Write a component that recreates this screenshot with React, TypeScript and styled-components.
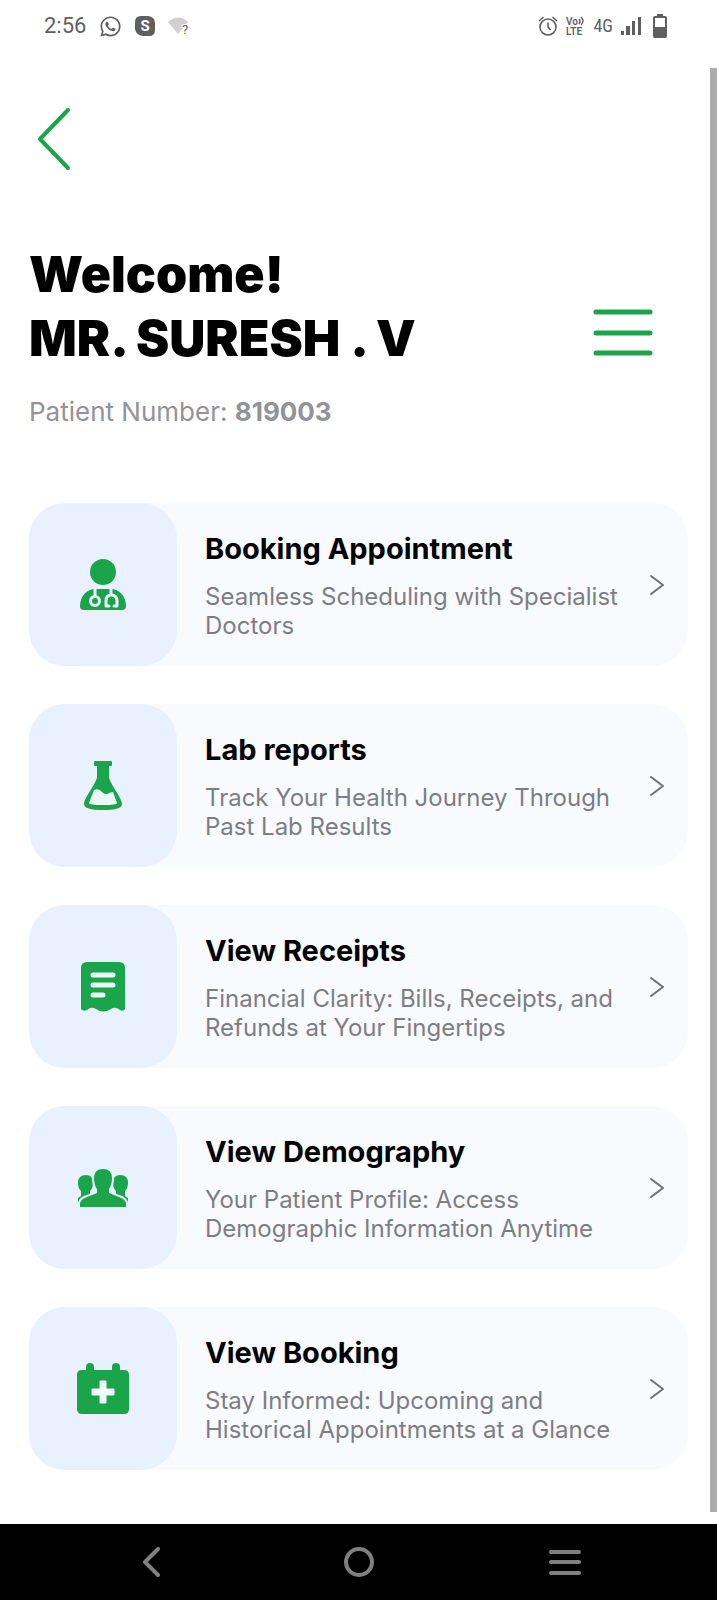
import React from "react";
import styled, { createGlobalStyle } from "styled-components";
import { FaWhatsapp } from "react-icons/fa";

const green = "#1aa54a";

const GlobalStyle = createGlobalStyle`
  *, *::before, *::after { box-sizing: border-box; }
  body {
    margin: 0;
    background: #ffffff;
    font-family: Inter, "Liberation Sans", sans-serif;
    color: #000000;
  }
`;

const Screen = styled.div`
  display: flex;
  flex-direction: column;
  min-height: 100vh;
`;

const StatusBar = styled.header`
  display: flex;
  justify-content: space-between;
  align-items: flex-start;
  height: 68px;
  padding: 10px 50px 0 44px;
  color: #5f5f5f;
  font-family: Roboto, sans-serif;
`;

const StatusGroup = styled.div<{ $gap: number }>`
  display: flex;
  align-items: center;
  gap: ${(p) => p.$gap}px;
  height: 32px;
  svg { display: block; }
`;

const Clock = styled.time`
  font-size: 22px;
  line-height: 32px;
`;

const Network = styled.span`
  font-family: "Roboto Condensed", Roboto, sans-serif;
  font-size: 18px;
  line-height: 32px;
`;

const Battery = styled.span`
  padding-left: 4px;
`;

const Body = styled.div`
  display: flex;
  flex: 1;
`;

const Content = styled.main`
  flex: 1;
  min-width: 0;
  padding: 34px 22px 54px 29px;
`;

const ScrollThumb = styled.div`
  flex: none;
  width: 7px;
  margin-bottom: 12px;
  background: #adadad;
`;

const IconButton = styled.button`
  display: flex;
  align-items: center;
  justify-content: center;
  padding: 0;
  border: 0;
  background: none;
  color: inherit;
  cursor: pointer;
`;

const BackButton = styled(IconButton)`
  width: 50px;
  height: 74px;
  color: ${green};
`;

const Intro = styled.section`
  display: flex;
  align-items: center;
  justify-content: space-between;
  margin-top: 66px;
  padding-right: 34px;
`;

const MenuButton = styled(IconButton)`
  width: 62px;
  height: 64px;
  padding-bottom: 4px;
  color: ${green};
`;

const Heading = styled.h1`
  margin: 0;
  font-size: 50px;
  line-height: 64px;
  font-weight: 900;
`;

const PatientNumber = styled.p`
  margin: 26px 0 0;
  font-size: 26px;
  line-height: 32px;
  font-weight: 400;
  color: #929397;
  strong { font-weight: 700; }
`;

const CardList = styled.nav`
  display: flex;
  flex-direction: column;
  gap: 38px;
  margin-top: 75px;
`;

const Card = styled.a`
  display: flex;
  align-items: stretch;
  min-height: 163px;
  border-radius: 36px;
  background: #f8fafe;
  color: inherit;
  text-decoration: none;
`;

const IconTile = styled.span`
  display: flex;
  flex: none;
  align-items: center;
  justify-content: center;
  width: 148px;
  border-radius: 36px;
  background: #e9f1fe;
  color: ${green};
`;

const CardText = styled.span`
  flex: 1;
  padding: 28px 0 26px 28px;
`;

const CardTitle = styled.span`
  display: block;
  font-size: 29px;
  line-height: 36px;
  font-weight: 700;
`;

const CardDescription = styled.span`
  display: block;
  margin-top: 15px;
  font-size: 24px;
  line-height: 29px;
  font-weight: 400;
  color: #7d7e83;
`;

const CardArrow = styled.span`
  display: flex;
  flex: none;
  align-items: center;
  padding: 0 24px 0 12px;
  color: #6f7076;
`;

const SystemBar = styled.footer`
  display: flex;
  height: 77px;
  padding: 0 48px;
  background: #000000;
  color: #808080;
`;

const SystemButton = styled(IconButton)`
  flex: 1;
`;

const DoctorIcon = () => (
  <svg width="52" height="56" viewBox="0 0 52 56" aria-hidden="true">
    <circle cx="26" cy="15" r="13" fill="currentColor" />
    <path d="M3 49C3 39 10 32 18 32H34C42 32 49 39 49 49Q49 53 45 53H7Q3 53 3 49Z" fill="currentColor" />
    <g fill="none" stroke="#e9f1fe" strokeWidth="3">
      <path d="M18 31V39M34 31V38" />
      <circle cx="18" cy="44" r="4.5" />
      <path d="M32 49H29V44Q29 38 34 38Q40 38 40 44V49H37" strokeLinecap="round" strokeLinejoin="round" />
    </g>
  </svg>
);

const FlaskIcon = () => (
  <svg width="42" height="52" viewBox="0 0 42 52" aria-hidden="true">
    <path
      d="M13 1H29Q30 1 30 2V5Q30 6 29 6H27V17C28 24 40 38 40 44Q40 50 21 50T2 44C2 38 14 24 15 17V6H13Q12 6 12 5V2Q12 1 13 1Z"
      fill="currentColor"
    />
    <path d="M12 30Q17 28 20 32Q24 36 27 33L31 32L35 43Q35 45 21 45T7 43Z" fill="#eaf7fb" />
  </svg>
);

const ReceiptIcon = () => (
  <svg width="46" height="52" viewBox="0 0 46 52" aria-hidden="true">
    <path
      d="M7 1H39Q45 1 45 7V48Q43 51 40 49Q35 45 31 48Q23 53 16 48Q11 45 7 49Q3 51 1 48V7Q1 1 7 1Z"
      fill="currentColor"
    />
    <path d="M13 14H33M13 24H33M13 34H23" stroke="#e9f8f8" strokeWidth="5" strokeLinecap="round" />
  </svg>
);

const PeopleIcon = () => (
  <svg width="50" height="38" viewBox="0 0 50 38" aria-hidden="true">
    <g fill="currentColor">
      <path d="M0 38V29L3 27V22Q0 19 0 14Q0 6 8 6Q15 6 15 14Q15 19 12 22V27L20 31V38Z" />
      <path d="M50 38V29L47 27V22Q50 19 50 14Q50 6 42 6Q35 6 35 14Q35 19 38 22V27L30 31V38Z" />
    </g>
    <path
      d="M2 45V34Q3 30 9 28L19 24V20Q16 16 16 9Q16 0 25 0T34 9Q34 16 31 20V24L41 28Q47 30 48 34V45Z"
      fill="currentColor"
      stroke="#e9f1fe"
      strokeWidth="4"
      paintOrder="stroke"
    />
  </svg>
);

const CalendarPlusIcon = () => (
  <svg width="52" height="52" viewBox="0 0 52 52" aria-hidden="true">
    <path
      d="M5 7H9V4Q9 0 13 0T17 4V7H35V4Q35 0 39 0T43 4V7H47Q52 7 52 12V46Q52 51 47 51H5Q0 51 0 46V12Q0 7 5 7Z"
      fill="currentColor"
    />
    <path
      d="M23 18H29V26H37V32H29V40H23V32H15V26H23Z"
      fill="#f0faf9"
      stroke="#f0faf9"
      strokeLinejoin="round"
    />
  </svg>
);

const items = [
  { id: "appointment", title: "Booking Appointment", text: "Seamless Scheduling with Specialist Doctors", Icon: DoctorIcon },
  { id: "lab", title: "Lab reports", text: "Track Your Health Journey Through Past Lab Results", Icon: FlaskIcon },
  { id: "receipts", title: "View Receipts", text: "Financial Clarity: Bills, Receipts, and Refunds at Your Fingertips", Icon: ReceiptIcon },
  { id: "demography", title: "View Demography", text: "Your Patient Profile: Access Demographic Information Anytime", Icon: PeopleIcon },
  { id: "booking", title: "View Booking", text: "Stay Informed: Upcoming and Historical Appointments at a Glance", Icon: CalendarPlusIcon },
];

const SkypeIcon = () => (
  <svg width="20" height="20" viewBox="0 0 20 20" aria-hidden="true">
    <path d="M6 0H13Q20 1 20 7V14Q20 20 14 20H8Q1 19 0 13V6Q0 0 6 0Z" fill="currentColor" />
    <text x="10" y="15" fontSize="15" fontWeight="700" fontFamily="Roboto, sans-serif" textAnchor="middle" fill="#ffffff">S</text>
  </svg>
);

const WifiIcon = () => (
  <svg width="22" height="20" viewBox="0 0 22 20" aria-hidden="true">
    <path d="M0 6Q10 -3 20 6L10 18Z" fill="#d0d0d0" />
    <text x="17" y="18" fontSize="13" fontWeight="400" fontFamily="Roboto, sans-serif" textAnchor="middle" fill="currentColor" stroke="#ffffff" strokeWidth="2" paintOrder="stroke">?</text>
  </svg>
);

const AlarmIcon = () => (
  <svg width="20" height="20" viewBox="0 0 20 20" fill="none" stroke="currentColor" strokeWidth="1.6" aria-hidden="true">
    <circle cx="10" cy="11" r="8" />
    <path d="M10 6.5V11L12.5 14M1 5L5.5 1M19 5L14.5 1" />
  </svg>
);

const VolteIcon = () => (
  <svg width="19" height="24" viewBox="0 0 19 24" aria-hidden="true">
    <g fill="currentColor" fontFamily="Roboto, sans-serif" fontWeight="600">
      <text x="0" y="11" fontSize="10">Vo</text>
      <text x="0" y="21" fontSize="10">LTE</text>
    </g>
    <path d="M13 5Q15 7 13 10M15 3Q19 7 15 11" fill="none" stroke="currentColor" strokeWidth="1.4" />
  </svg>
);

const SignalIcon = () => (
  <svg width="20" height="20" viewBox="0 0 20 20" fill="currentColor" aria-hidden="true">
    <path d="M0 15H3V19H0ZM5 10H9V19H5ZM11 5H14V19H11ZM17 1H20V19H17Z" />
  </svg>
);

const BatteryIcon = () => (
  <svg width="14" height="24" viewBox="0 0 14 24" aria-hidden="true">
    <path
      d="M4 0H10V2H12Q14 2 14 4V22Q14 24 12 24H2Q0 24 0 22V4Q0 2 2 2H4ZM2 4V13H12V4Z"
      fill="currentColor"
      fillRule="evenodd"
    />
  </svg>
);

export default function App() {
  return (
    <>
      <GlobalStyle />
      <Screen>
        <StatusBar>
          <StatusGroup $gap={13}>
            <Clock>2:56</Clock>
            <FaWhatsapp size={23} />
            <SkypeIcon />
            <WifiIcon />
          </StatusGroup>
          <StatusGroup $gap={8}>
            <AlarmIcon />
            <VolteIcon />
            <Network>4G</Network>
            <SignalIcon />
            <Battery>
              <BatteryIcon />
            </Battery>
          </StatusGroup>
        </StatusBar>
        <Body>
          <Content>
            <BackButton type="button" aria-label="Back">
              <svg width="36" height="64" viewBox="0 0 36 64" fill="none" stroke="currentColor" strokeWidth="4" strokeLinecap="round" strokeLinejoin="round" aria-hidden="true">
                <path d="M32 3L4 32L32 61" />
              </svg>
            </BackButton>
            <Intro>
              <div>
                <Heading>
                  Welcome!
                  <br />
                  MR. SURESH . V
                </Heading>
                <PatientNumber>
                  Patient Number: <strong>819003</strong>
                </PatientNumber>
              </div>
              <MenuButton type="button" aria-label="Menu">
                <svg width="60" height="48" viewBox="0 0 60 48" stroke="currentColor" strokeWidth="5" strokeLinecap="round" aria-hidden="true">
                  <path d="M3 3H57M3 24H57M3 44H57" />
                </svg>
              </MenuButton>
            </Intro>
            <CardList aria-label="Patient services">
              {items.map(({ id, title, text, Icon }) => (
                <Card key={id} href={`#${id}`}>
                  <IconTile>
                    <Icon />
                  </IconTile>
                  <CardText>
                    <CardTitle>{title}</CardTitle>
                    <CardDescription>{text}</CardDescription>
                  </CardText>
                  <CardArrow>
                    <svg width="14" height="22" viewBox="0 0 14 22" fill="none" stroke="currentColor" strokeWidth="2" strokeLinecap="round" strokeLinejoin="round" aria-hidden="true">
                      <path d="M1 2L13 11L1 20" />
                    </svg>
                  </CardArrow>
                </Card>
              ))}
            </CardList>
          </Content>
          <ScrollThumb />
        </Body>
        <SystemBar>
          <SystemButton type="button" aria-label="System back">
            <svg width="20" height="32" viewBox="0 0 20 32" fill="none" stroke="currentColor" strokeWidth="4" strokeLinecap="round" strokeLinejoin="round" aria-hidden="true">
              <path d="M16 2L3 15L16 28" />
            </svg>
          </SystemButton>
          <SystemButton type="button" aria-label="Home">
            <svg width="32" height="32" viewBox="0 0 32 32" fill="none" stroke="currentColor" strokeWidth="4" aria-hidden="true">
              <circle cx="16" cy="15" r="13" />
            </svg>
          </SystemButton>
          <SystemButton type="button" aria-label="Recent apps">
            <svg width="34" height="26" viewBox="0 0 34 26" stroke="currentColor" strokeWidth="4" strokeLinecap="round" aria-hidden="true">
              <path d="M2 2H30M2 12H30M2 23H30" />
            </svg>
          </SystemButton>
        </SystemBar>
      </Screen>
    </>
  );
}
